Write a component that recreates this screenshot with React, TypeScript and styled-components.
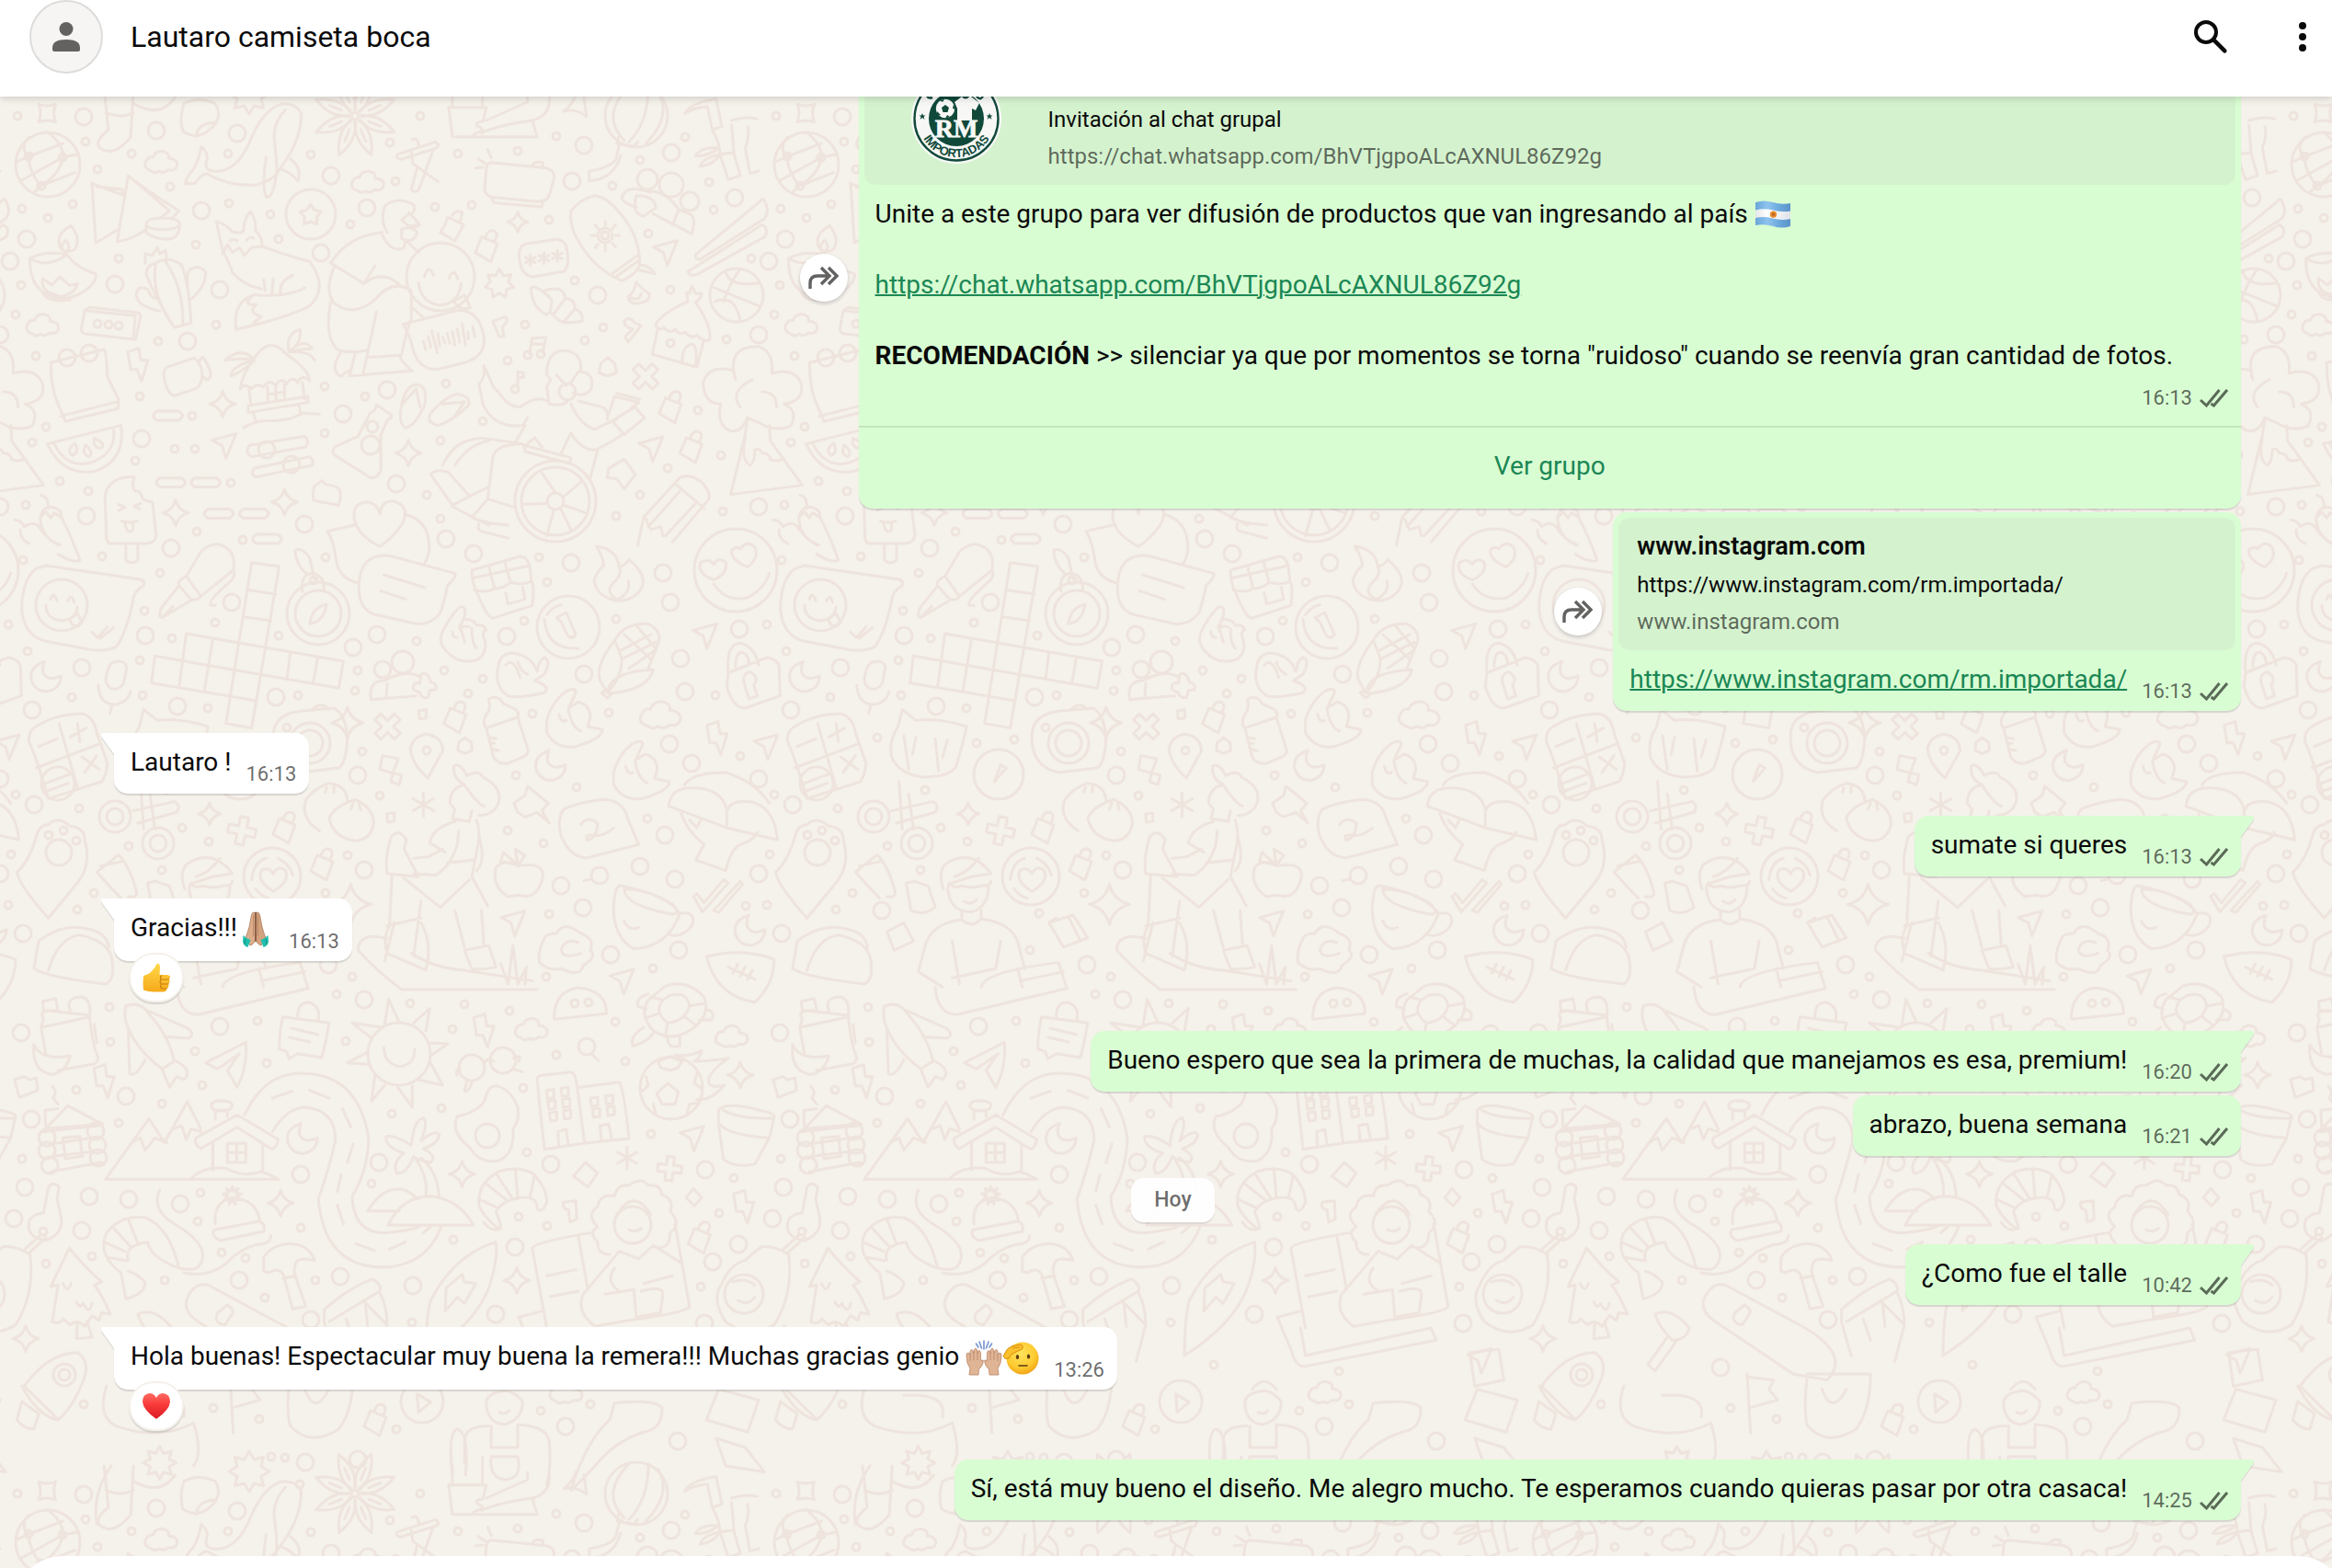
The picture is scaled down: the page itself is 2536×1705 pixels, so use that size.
import React from "react";
import styled, { createGlobalStyle } from "styled-components";

const GlobalStyle = createGlobalStyle`
  *, *::before, *::after { box-sizing: border-box; }
  body {
    margin: 0;
    background: #f5f1eb;
    font-family: Roboto, "Open Sans", sans-serif;
    color: #0a0a0a;
  }
  button { font: inherit; border: 0; padding: 0; background: none; cursor: pointer; }
`;

/* ---------- wallpaper doodles ---------- */

const TILE_W = 825;
const TILE_H = 1498;
const SX = 0.5262;
const SY = 0.3333;

type Ring = [number, number, number?];
type Sheet = { top: number; paths: string[]; small: Ring[]; big: Ring[]; rings: Ring[] };

const px = (x: number, y: number, pts: [number, number][], close = true) =>
  "M" + pts.map(([a, b]) => `${(x + a / SX).toFixed(1)} ${(y + b / SY).toFixed(1)}`).join("L") + (close ? "Z" : "");

const star = (x: number, y: number, n: number, r1: number, r2: number) =>
  px(
    x,
    y,
    Array.from({ length: n * 2 }, (_, i) => {
      const a = (Math.PI * i) / n - Math.PI / 2;
      const r = i % 2 ? r2 : r1;
      return [r * Math.cos(a), r * Math.sin(a)] as [number, number];
    })
  );

const spark = (x: number, y: number, r = 14) => {
  const w = r / SX;
  const h = r / SY;
  return `M${x} ${y - h}Q${x + w * 0.2} ${y - h * 0.2} ${x + w} ${y}Q${x + w * 0.2} ${y + h * 0.2} ${x} ${y + h}Q${x - w * 0.2} ${y + h * 0.2} ${x - w} ${y}Q${x - w * 0.2} ${y - h * 0.2} ${x} ${y - h}Z`;
};

const cloud = (x: number, y: number, k = 1) => {
  const p = (a: number, b: number) => `${x + a * k} ${y + b * k}`;
  return `M${p(-20, 30)}Q${p(-40, 20)} ${p(-30, -5)}Q${p(-25, -18)} ${p(-17, -14)}Q${p(-12, -38)} ${p(5, -34)}Q${p(18, -28)} ${p(15, -12)}Q${p(34, -10)} ${p(33, 12)}Q${p(30, 32)} ${p(14, 26)}Q${p(6, 40)} ${p(-4, 30)}Q${p(-14, 40)} ${p(-20, 30)}Z`;
};

const cross = (x: number, y: number, rot: number, s = 15) => {
  const w = s * 0.3;
  const pts: [number, number][] = [
    [-w, -s], [w, -s], [w, -w], [s, -w], [s, w], [w, w], [w, s], [-w, s], [-w, w], [-s, w], [-s, -w], [-w, -w],
  ];
  const c = Math.cos(rot);
  const d = Math.sin(rot);
  return px(x, y, pts.map(([a, b]) => [a * c - b * d, a * d + b * c] as [number, number]));
};

const bolt = (x: number, y: number) =>
  px(x, y, [[-11, -14], [1, -18], [3, -5], [11, -5], [4, 18], [-1, 5], [-8, 5]]);

const moon = (x: number, y: number) =>
  `M${x - 3} ${y - 52}Q${x - 36} ${y - 35} ${x - 30} ${y + 10}Q${x - 20} ${y + 50} ${x + 5} ${y + 45}Q${x + 30} ${y + 35} ${x + 31} ${y - 5}Q${x + 5} ${y + 15} ${x - 6} ${y - 15}Q${x - 8} ${y - 35} ${x - 3} ${y - 52}Z`;

const lock = (x: number, y: number) =>
  px(x, y, [[-5, -10], [12, -3], [5, 17], [-12, 7]]) +
  `M${x - 2} ${y - 28}Q${x + 4} ${y - 58} ${x + 18} ${y - 48}Q${x + 26} ${y - 38} ${x + 16} ${y - 14}`;

const pill = (x: number, y: number) =>
  `M${x - 22} ${y - 15}H${x + 22}Q${x + 38} ${y} ${x + 22} ${y + 15}H${x - 22}Q${x - 38} ${y} ${x - 22} ${y - 15}Z`;

const nav = (x: number, y: number) => px(x, y, [[-13, -4], [13, -11], [2, 16], [-2, 2]]);

const square = (x: number, y: number) => px(x, y, [[-4, -4], [4, -5], [4, 4], [-3, 5]]);

const asterisk = (x: number, y: number, s: number) =>
  [0, 1, 2]
    .map((i) => {
      const a = (Math.PI * i) / 3 + Math.PI / 2;
      return px(x, y, [[s * Math.cos(a), s * Math.sin(a)], [-s * Math.cos(a), -s * Math.sin(a)]], false);
    })
    .join("");

const petals = (x: number, y: number) =>
  Array.from({ length: 8 }, (_, i) => {
    const a = (Math.PI * 2 * i) / 8 + 0.39;
    const at = (r: number, o: number) =>
      `${(x + (r * Math.cos(a + o)) / SX).toFixed(1)} ${(y + (r * Math.sin(a + o)) / SY).toFixed(1)}`;
    return `M${at(7, -0.3)}Q${at(26, -0.5)} ${at(46, 0)}Q${at(26, 0.5)} ${at(7, 0.3)}M${at(16, 0)}L${at(30, 0)}`;
  }).join("");

const hand =
  "M1130 580Q1140 520 1170 485Q1190 470 1190 490L1175 540L1195 520Q1220 530 1220 570L1215 600L1245 610Q1245 640 1190 665Q1150 675 1130 620ZM1155 560Q1160 590 1170 580M1175 545Q1180 600 1200 615";

const handAt = (dx: number, dy: number) => {
  let odd = false;
  return hand.replace(/\d+/g, (n) => {
    odd = !odd;
    return String(Number(n) + (odd ? dx : dy));
  });
};

const sheets: Sheet[] = [
  {
    top: 106,
    paths: [
      "M80 22Q97 32 115 22Q108 50 115 80Q97 70 80 80Q87 50 80 22Z",
      "M60 130Q40 160 58 193Q62 250 85 288M98 113Q130 150 130 193Q125 250 85 288M35 210L58 193L130 150M45 270L130 195L162 185M70 310L85 288L155 245",
      "M215 -30L224 105Q190 150 210 168Q235 195 270 130L276 -30M219 50Q250 70 276 50M276 20Q330 70 362 0",
      "M380 20Q410 -5 445 20Q460 60 440 95Q410 145 378 110Q370 70 380 20ZM405 128Q410 80 447 82",
      star(515, -12, 8, 22, 14),
      "M622 50Q610 15 580 22Q545 40 520 130Q490 250 440 240Q420 235 428 200Q430 180 416 160Q412 200 400 235Q385 255 383 282L403 280Q415 250 428 248Q470 290 530 285Q570 265 575 240Q625 140 622 50ZM590 40Q560 90 568 150Q572 210 572 240Q565 330 551 325Q540 300 550 195M600 200Q625 230 616 272Q600 245 583 235",
      petals(734, 60),
      "M927 32L935 128H1110L1100 75M927 32H1005L998 78M935 30V-30M997 30V-60M1005 75L1090 15V-10M998 78Q980 80 988 95Q1000 100 995 110Q975 120 978 128M995 115Q1030 90 1100 75Q1140 60 1135 -10",
      "M822 185L900 145Q910 155 902 165L828 202Q815 198 822 185ZM852 137Q860 130 864 145L866 160M850 180L853 215L905 275M862 230L850 300Q858 315 866 300L895 170",
      "M1015 212L1130 230Q1148 240 1145 265L1135 320Q1130 340 1110 340L1015 325Q998 315 1002 290L1005 230Q1008 212 1015 212ZM1018 325Q1015 345 1030 345L1120 357L1122 340M1100 222Q1105 208 1122 212V228M988 200L1003 215M1008 170L1015 197M983 230L998 228",
      "M1300 -38Q1240 60 1290 140M1340 -35Q1340 80 1300 145M1360 -20Q1390 60 1335 150M1278 130L1275 150L1310 160L1318 145M1280 155L1275 185Q1275 225 1218 240V272Q1270 265 1282 190",
      "M1190 -10Q1185 20 1165 45Q1190 35 1212 62L1207 0",
      "M1415 52Q1430 15 1480 5L1492 95L1472 105L1462 30Q1440 30 1415 52ZM1472 105Q1488 150 1488 185L1505 268L1530 255L1517 185L1512 90M1488 185L1515 180M1512 75Q1540 60 1565 70M1545 95Q1550 130 1540 165L1550 248L1568 240M1437 190Q1450 160 1485 165Q1460 195 1437 190ZM1447 225Q1450 200 1488 185Q1475 220 1447 225Z",
      cloud(333, 210),
      cloud(760, 275),
      cloud(88, 742),
      "M190 280L198 475L242 432M190 280L253 318V300L200 290M265 255L242 470Q270 465 303 430M265 255Q290 290 370 370L355 395M265 255Q300 300 350 370L330 395M302 412Q305 393 336 393Q370 393 371 412Q368 430 336 431Q305 430 302 412V440Q320 465 350 462Q372 455 371 412",
      "M147 418Q110 450 127 495Q140 510 155 495Q168 460 147 418ZM136 466Q120 490 135 505Q150 490 136 466ZM62 525Q60 610 95 640Q130 670 165 640Q200 610 198 575Q160 560 138 512Q90 500 62 525Q100 560 138 512M88 590Q85 620 100 635L125 650Q155 640 160 608L143 612Q135 600 123 585L107 612ZM88 635Q95 670 145 660",
      "M1570 340L1438 512Q1435 530 1448 527L1580 395Q1590 375 1583 350Q1578 320 1570 340ZM1575 415L1422 568Q1425 585 1440 578L1580 455Q1590 430 1575 415Z",
      "M322 540Q345 515 375 545Q390 600 395 735Q380 745 360 750Q320 650 303 580Q300 550 322 540ZM322 540Q310 640 360 750M340 530Q380 620 378 740M300 540V510L315 515L325 490L330 510L342 500L345 530M330 697Q280 680 282 640Q285 610 305 625Q310 650 320 655M393 660Q425 620 425 570Q410 540 390 565Q385 590 388 610",
      "M447 405Q455 460 460 500Q475 540 480 570Q500 610 540 625M447 405Q465 410 480 438Q500 445 503 435Q505 390 518 372Q530 400 528 435Q545 460 540 485Q600 520 640 535Q680 620 640 680Q600 715 488 757Q480 660 530 642M460 510L470 480L480 505L495 490L505 515L520 490L545 485M520 650Q500 680 530 675Q510 700 540 715L525 735M545 595L548 630M565 590L562 640M580 640Q575 600 605 580M530 645Q600 650 630 620M475 468Q483 458 490 468M510 465Q518 452 524 460",
      star(642, 384, 5, 12, 7),
      "M790 440Q720 450 683 540L752 607L775 550M690 555Q670 630 690 670Q730 720 775 660Q810 590 850 630V720Q840 760 830 840Q820 850 852 892L722 908L735 830M683 670Q670 790 700 825Q730 835 758 825M778 700L750 905M758 848L830 840M705 828Q680 890 705 910Q718 890 725 890M752 607Q790 560 825 610M800 440Q785 400 795 355Q820 320 855 350Q860 380 845 380L830 400L845 420L865 415L860 400M845 375L868 415L855 425M790 450Q810 510 835 490L838 465L865 505M830 430Q850 415 862 440Q855 480 830 460Z",
      "M865 605Q870 670 910 678Q950 670 953 605M877 585Q885 540 896 580M928 590Q937 550 946 592M938 665L960 645L972 685Q950 700 938 665Z",
      "M833 740L945 695Q990 690 1000 780Q1005 845 960 865L910 885Q870 895 855 830Q845 765 833 740ZM875 795L880 823M885 780L890 815M892 762L904 833M905 770L909 812M915 782L919 802M924 770L930 803M935 765L940 808M945 755L950 798M955 738L962 808M967 765L968 788M977 748L981 780M855 690L875 718",
      "M925 390L958 415L940 468L910 440L920 415ZM935 385Q940 365 955 375Q955 390 950 405",
      lock(1005, 485),
      "M1085 478L1150 463Q1170 465 1172 500Q1178 550 1165 568L1100 585Q1080 580 1075 540Q1068 490 1085 478Z",
      asterisk(1096, 530, 6),
      asterisk(1124, 524, 6),
      asterisk(1152, 517, 6),
      "M1230 320Q1200 330 1180 370Q1175 420 1200 480Q1230 560 1285 598Q1325 570 1322 530Q1318 440 1280 375Q1255 325 1230 320ZM1265 575L1318 515M1273 585L1322 530M1251 405V418M1251 482V500M1222 450H1230M1272 450H1280M1230 415L1236 428M1272 415L1266 428M1230 490L1236 478M1272 488L1266 476M1322 545Q1345 550 1353 575L1318 562",
      "M1345 310Q1290 280 1285 330Q1295 350 1315 358M1315 320Q1305 380 1330 388Q1345 370 1355 360Q1355 320 1315 320ZM1345 305Q1380 310 1402 365L1425 380Q1440 390 1430 445L1350 380M1390 415L1402 370",
      "M1475 620L1568 680M1500 570Q1510 620 1568 605M1530 560Q1510 600 1495 665M1478 665Q1520 640 1530 730",
      star(1032, 608, 7, 16, 10),
      "M1315 602Q1310 640 1298 650Q1300 675 1320 672Q1345 665 1342 640Q1330 630 1315 602ZM1300 650Q1320 670 1325 640",
      "M1422 665Q1360 710 1355 745Q1365 765 1372 750Q1385 775 1395 755Q1405 780 1415 765Q1430 790 1440 775Q1455 800 1467 790Q1470 740 1437 668M1360 750L1348 838L1440 880L1455 790M1410 860Q1410 810 1430 805Q1442 810 1438 870M1422 665Q1415 625 1425 640L1430 615L1438 640L1450 640Q1450 655 1437 668",
      "M1097 620Q1110 610 1140 660Q1140 700 1130 708Q1100 690 1097 620ZM1125 630Q1165 610 1168 655Q1190 660 1188 690Q1205 695 1203 730Q1180 735 1165 735Q1150 725 1138 700M1168 655L1143 710M1188 690L1165 732",
      "M1018 730L1045 715Q1052 730 1038 750L1042 778L1032 780Z",
      "M1094 835L1100 785L1128 783L1122 832M1098 805L1126 803M1070 945L1070 895L1082 898V912L1072 915",
      "M1290 730Q1300 710 1312 735L1325 745L1298 798L1292 780L1308 755Q1290 750 1290 730Z",
      "M105 865L215 822Q220 822 222 910L245 985L244 1015L135 1057L120 1000Q105 950 105 865ZM125 1040L244 992",
      "M185 685L285 702Q292 705 290 718L280 790L175 770Q168 765 168 755L175 695ZM175 695L280 712L275 788",
      bolt(285, 872),
      "M345 880L400 850Q415 860 418 900Q418 935 405 950L360 973Q345 965 340 920Q335 890 345 880ZM410 870Q415 845 420 848Q430 870 436 900Q434 920 428 922L418 910",
      "M497 950Q500 900 530 840Q560 780 590 835Q640 890 640 925Q625 900 615 930Q605 905 592 935Q580 910 570 940Q558 915 545 945Q532 930 520 950Q505 930 497 950ZM515 950L518 1000M625 930L630 985M513 1005L637 975V995L513 1028ZM523 1030L530 1060M617 1000L622 1035M503 1078Q530 1050 560 1055Q600 1055 625 1030L660 1033M553 945V990M588 938V980M553 970L588 960M570 940V985M525 855Q500 810 465 857Q490 850 525 855Q475 880 478 908Q500 895 525 860M597 830Q590 770 620 757Q625 800 597 830Q630 780 645 820Q625 820 597 830Q640 825 650 857",
      "M1520 920Q1500 810 1568 812Q1600 830 1595 900Q1640 880 1655 930Q1665 990 1620 1000Q1650 1020 1635 1070Q1620 1085 1590 1078Q1570 1060 1545 1045Q1530 1100 1505 1085Q1480 1060 1490 1000Q1455 1000 1453 930Q1465 870 1515 890M1530 1010Q1505 960 1555 920M1605 1010Q1605 960 1575 960",
      "M1545 1045L1540 1100L1510 1295L1658 1265L1592 1120L1590 1070M1540 1110Q1530 1180 1550 1200Q1560 1190 1560 1150Q1568 1140 1575 1160Q1590 1160 1592 1180Q1600 1190 1620 1180",
      pill(347, 1038), pill(353, 1256), pill(425, 1256), pill(452, 1358), pill(525, 1358), pill(552, 1440),
      "M98 1130L250 1070Q260 1180 200 1218Q130 1240 98 1130ZM112 1130Q140 1215 190 1190Q240 1160 235 1085M155 1128Q135 1150 150 1168Q165 1155 155 1128ZM177 1133Q168 1165 184 1172Q195 1160 177 1133ZM195 1112Q190 1140 208 1145Q222 1130 195 1112Z",
      nav(463, 1130), nav(1375, 500), nav(1345, 1140),
      spark(460, 1000), spark(844, 1160), spark(588, 1320), spark(363, 1355), spark(1070, 406, 11),
      "M515 1135L630 1105Q640 1120 632 1140L520 1172Q505 1160 515 1135ZM525 1210L640 1172Q650 1185 645 1200L530 1238Q515 1230 525 1210Z",
      "M778 1002L808 1035Q812 1045 802 1050L787 1100V1215Q780 1245 765 1240L690 1165Q685 1155 692 1140L740 1105L765 1030L775 1020Z",
      "M860 937Q885 940 878 1000Q860 1070 838 1078Q820 1060 832 990Q840 940 860 937ZM832 1000L860 950L868 1010M945 968Q975 975 968 1005Q930 1060 905 1070Q880 1060 890 1030Q920 975 945 968ZM915 1000L960 993L935 1050",
      "M1000 875L1020 945L1035 970Q1050 1010 1075 1010Q1110 970 1130 990M1000 875Q1005 910 990 935L998 1000Q1020 1080 1080 1070L1090 1045M1085 1070L1065 1125M1195 990L1245 1010Q1258 1020 1255 1050M1180 1000Q1200 1070 1230 1083Q1255 1060 1275 1050M1180 1095L1160 1160M1180 1095Q1200 1150 1230 1150Q1270 1120 1285 1100M1235 1150L1220 1240M1265 1055L1312 1010L1332 1045L1290 1100ZM1255 1045L1270 975L1320 995L1305 1012M1275 965L1322 985",
      "M1130 900Q1130 830 1165 825Q1205 830 1200 895Q1230 900 1222 950Q1210 980 1185 965M1130 905L1138 920L1130 945L1135 1000Q1170 1010 1175 985M1170 940L1150 905M1180 930L1195 895",
      "M915 1200Q940 1110 1000 1112L1080 1130M940 1200Q970 1130 1010 1120M925 1220L970 1300M925 1222Q900 1210 890 1230L935 1330L1010 1270M1080 1130Q1020 1130 1018 1180L1008 1310L1060 1335M935 1335L1010 1395M1008 1310L975 1370Q1000 1390 1050 1395M990 1390Q985 1410 995 1415L1050 1438M1083 1135L1180 1175Q1180 1190 1172 1192L1085 1155ZM1090 1130L1105 1110L1120 1140",
      "M1148 1290L1120 1225M1163 1305L1200 1255M1165 1330L1210 1355M1145 1345L1130 1430M1130 1325L1078 1327M1160 1345L1180 1410",
      cross(1334, 910, 0.78), star(1256, 882, 3, 11, 9), lock(1385, 1010), lock(1428, 1140),
      "M1258 1210L1290 1180L1313 1230L1290 1278L1275 1245L1255 1240Z",
      "M1390 1450L1465 1310Q1470 1290 1450 1255Q1425 1225 1405 1240L1330 1370L1318 1460M1395 1260L1455 1340M1405 1285L1340 1400M1440 1320L1375 1430M1335 1375L1345 1410L1365 1400L1370 1430",
      "M220 1440L217 1300Q225 1235 278 1238Q270 1270 280 1285Q290 1280 295 1310Q310 1320 315 1320L323 1430Q320 1455 300 1455H225ZM245 1328L258 1337L245 1348M290 1325L277 1333L288 1343M252 1382Q268 1390 283 1382M258 1387Q262 1430 275 1410V1387M260 1455V1510Q272 1525 285 1510V1455",
      "M85 1298Q100 1300 100 1340M83 1370L90 1345Q105 1325 125 1350L127 1370L112 1355L105 1372L95 1352L83 1370Q85 1440 125 1460M127 1370Q150 1440 165 1510Q150 1520 120 1490M30 1378Q45 1380 50 1400Q70 1380 80 1400Q90 1430 120 1460M42 1410Q40 1440 60 1455",
      "M650 1268L665 1250L672 1262Q690 1265 700 1275Q708 1290 700 1330L648 1315Q645 1290 650 1268Z",
      "M785 1358Q790 1310 815 1318Q850 1335 830 1395Q810 1440 785 1465Q740 1430 732 1375Q728 1320 760 1320Q780 1325 785 1358ZM732 1395L677 1415Q690 1450 695 1510Q700 1570 742 1585M838 1360Q885 1380 887 1460Q888 1500 875 1525",
    ],
    small: [[36,60],[177,145],[272,184],[202,235],[472,184],[642,187],[806,148],[868,61],[947,182],[1070,175],[1149,127],[1416,128],[1323,204],[1265,289],[1465,276],[818,272],[352,292],[46,363],[151,348],[99,393],[473,344],[558,381],[575,461],[725,414],[898,356],[975,351],[1135,399],[405,480],[245,524],[43,613],[1340,443],[1475,367],[1553,526],[1187,598],[1385,628],[1086,741],[1247,751],[1209,791],[447,741],[32,709],[326,796],[75,842],[1049,857],[289,974],[670,942],[755,975],[921,932],[398,1038],[95,1075],[998,1055],[1443,1020],[671,1096],[910,1118],[67,1126],[362,1146],[403,1146],[280,1186],[1490,1168],[1379,1208],[1323,1297],[882,1295],[477,1256],[124,1252],[182,1284],[53,1329],[1493,1349],[1273,1365],[910,1373],[407,1416],[501,1442],[1501,788],[590,-57],[58,193],[130,195],[86,288],[202,737],[224,741],[246,745],[1090,840],[1117,838],[1065,950],[734,60],[1385,800]],
    big: [[173,63],[324,108],[491,118],[685,255],[1206,156],[1388,179],[1182,272],[1518,328],[759,359],[416,369],[56,462],[664,508],[21,533],[237,610],[454,627],[1236,644],[387,794],[800,955],[709,1031],[293,1113],[819,1260],[629,1392],[179,1364],[922,1440],[1568,773],[0,1334],[631,-42],[138,850],[184,833],[552,1148],[602,1198],[1172,960],[1148,1317]],
    rings: [[98,220,35],[1315,60,34],[642,382,27],[910,586,37],[1338,267,11],[1388,285,13],[1426,338,10],[1522,645,29],[769,1075,6],[765,1135,10],[1148,1317,44],[1148,1317,37],[1251,450,8],[1251,450,4]],
  },
  {
    top: 590,
    paths: [
      "M75 85L95 75L290 120Q300 125 297 140Q275 160 275 190Q260 300 240 340Q220 355 190 350L90 320Q50 300 45 220Q45 120 75 85ZM95 205Q95 250 128 255Q158 250 160 210M105 185Q110 155 118 190M140 190Q148 165 153 195M143 250L160 232L170 260Q155 290 143 250M190 292L202 310L222 275M208 312L235 277",
      "M385 110L415 30Q430 5 450 5Q490 20 482 90L415 175M385 110Q365 125 370 140L395 185Q410 190 415 175ZM370 140L335 210Q325 240 335 245L395 188M335 245L358 208M482 90Q490 110 470 135Q430 190 435 205L445 205",
      "M520 65L577 78L520 605L467 590ZM385 297L710 387L700 475L320 370L313 458L527 515M385 297L370 470M440 313L422 487M600 358L593 445M657 373L647 460M515 155L570 168M505 242L560 255",
      "M610 25Q625 15 640 50L650 120M610 25Q610 70 635 105M625 160Q620 105 645 100Q670 105 670 155M675 202Q645 210 640 265Q668 260 675 202Z",
      "M760 60Q780 35 810 45L940 100Q945 110 925 140Q920 180 910 230Q890 270 860 265L775 235Q745 220 742 160Q740 90 760 60ZM793 105L878 147M787 157L838 185",
      "M975 90L1075 45Q1090 45 1095 80L1098 125Q1105 140 1100 205L1018 247Q1005 240 985 160Q975 130 975 90ZM1010 75L1022 150M1043 60L1055 130M980 115L1095 75M980 155Q1005 165 1022 150Q1040 150 1055 130Q1085 140 1098 125M1045 165L1050 200L1085 185L1080 145",
      "M1232 12Q1275 20 1280 80Q1295 70 1300 55Q1340 110 1325 150Q1310 190 1275 190Q1230 175 1228 120Q1240 80 1248 75Q1245 40 1232 12ZM1275 185Q1245 160 1275 120Q1285 100 1280 80M1278 185Q1305 160 1298 125",
      "M1475 70Q1485 45 1500 65Q1505 100 1475 122Q1440 100 1448 65Q1465 50 1475 70ZM1530 20Q1545 -10 1560 15Q1570 50 1545 80Q1510 55 1512 25Q1520 10 1530 20ZM1475 135Q1500 195 1545 180Q1580 150 1590 100",
      "M915 290Q930 240 950 210Q965 205 960 240L950 280Q960 270 970 275M960 250Q980 250 985 270Q1000 265 1005 285Q995 290 1000 310Q1010 350 990 380Q950 405 920 350Q905 320 915 290M935 290Q935 310 945 310M950 270Q960 320 960 325M975 280Q975 330 985 345",
      "M1125 250Q1130 350 1195 345M1130 235Q1145 205 1160 203M1150 245L1170 228L1190 300Q1180 320 1172 300L1160 260Z",
      "M1030 400Q1035 360 1060 360Q1100 370 1110 420Q1115 380 1125 375Q1140 385 1125 430L1105 450Q1140 470 1125 490Q1070 510 1050 500Q1020 470 1030 400ZM1045 400Q1060 370 1075 440M1070 390Q1075 420 1090 430",
      "M1270 320Q1230 400 1240 450L1255 490Q1285 440 1285 380Q1280 350 1270 320ZM1255 490Q1260 420 1350 415Q1340 480 1260 492M1255 480L1243 490L1255 507L1265 492M1270 320Q1290 260 1340 265Q1370 290 1360 330L1340 410M1285 350L1345 300M1285 380L1355 325M1300 410L1355 350M1290 300L1345 380M1315 270L1355 345",
      "M235 390Q260 380 262 410L255 460Q245 485 228 475Q215 460 220 430Q225 395 235 390ZM203 465Q205 530 240 528Q265 520 270 485M232 530L227 558",
      moon(95, 440), moon(1138, 730), moon(1550, 1268),
      "M767 512Q760 450 795 450Q840 410 870 440M767 512L860 500M800 460L798 505M870 430Q880 420 887 440L890 455Q905 460 900 480L888 482L885 505Q870 510 868 490L855 480Q850 455 868 458Z",
      "M1010 510Q1030 495 1040 525L1060 540Q1075 550 1070 570L1005 605Q995 590 1005 560Q1015 545 1010 510ZM1005 605L1020 700Q1030 725 1050 720L1080 700Q1095 690 1090 670L1070 570M1010 635L1025 640M1015 655L1022 655M1018 675L1030 678",
      hand,
      handAt(138, 170),
      cloud(1365, 562, 1.25),
      "M1505 425Q1500 330 1530 328Q1560 340 1568 400M1520 405Q1520 355 1535 358Q1548 370 1548 395M1505 425L1585 375Q1605 380 1610 400L1612 500L1540 540Q1515 540 1502 470ZM1540 470Q1530 430 1550 422Q1570 440 1558 465L1565 500L1548 510Z",
      spark(718, 588, 17), cross(801, 600, 0.78), square(873, 560), lock(940, 570), lock(587, 930), lock(665, 1050),
      "M882 625Q915 635 915 680L884 768Q850 720 848 670Q855 630 882 625Z",
      "M70 605Q110 560 170 558Q195 570 200 620L222 720Q220 760 210 780L100 835Q75 700 60 650Q58 620 70 605ZM75 735L208 655M122 590L160 800M80 665L118 640M160 590L165 650M145 635L178 605M170 700L205 740M200 695L175 750M95 785L145 755M98 810L142 785",
      "M288 600L297 545L325 580Q370 570 430 600Q425 640 408 730Q395 765 340 765Q290 755 275 700Q268 650 288 600ZM300 630L310 740M325 635L318 690M365 640L372 745M390 645L380 700",
      "M487 780L500 725L512 735Z",
      "M565 620Q570 560 620 550L690 540Q715 560 718 640Q715 720 700 735L620 750Q560 730 565 620ZM645 545Q665 515 680 545",
      star(961, 664, 3, 9, 8),
      "M790 695L823 705L812 752L785 740ZM812 752L830 758L825 790L808 780Z",
      "M275 875L360 845Q375 855 365 880L285 915M290 780L297 935M310 820L320 935",
      spark(433, 885, 12), cross(500, 940, 0.2), asterisk(875, 855, 13), square(807, 897), bolt(1482, 638),
      "M660 940Q620 900 632 840Q650 800 680 785Q715 790 718 840M680 900Q690 860 735 838Q775 870 772 920Q765 970 735 973Q690 965 680 900ZM675 800L672 815M690 795V815M730 850L725 870M742 852L745 872",
      "M1090 795L1133 850L1120 875L1135 915L1110 880L1085 895L1070 880L1062 850L1085 825Z",
      "M1165 870Q1200 845 1250 838Q1290 845 1297 900L1320 985L1215 1028Q1180 1030 1160 960Q1150 900 1165 870ZM1200 920Q1215 890 1235 915Q1235 960 1215 972Q1205 950 1230 955Q1245 960 1268 932",
      "M1382 860Q1385 800 1430 800Q1490 800 1502 870V930ZM1415 790Q1430 750 1500 750Q1560 780 1590 850M1505 870Q1510 840 1550 845Q1600 860 1607 970L1500 930M1408 885Q1420 940 1455 985L1438 1035L1500 1070Q1510 1000 1530 985Q1560 970 1565 945M1425 905L1440 930L1448 905",
      "M75 960Q80 920 100 920Q120 890 145 925Q175 930 175 970Q190 1050 160 1110L100 1225Q40 1120 35 1075Q60 1040 75 960Z",
      "M200 1075L245 1018Q270 1060 282 1140Q285 1160 265 1155M200 1075Q225 1120 250 1160M208 1055L253 1040M315 1200L305 1110L322 1105L350 1120L365 1190Q340 1220 315 1200Z",
      "M382 1130Q370 1080 385 1050Q430 1000 470 1060L480 1080L440 1090L400 1110Q385 1110 395 1160Q405 1205 440 1205Q475 1190 475 1120M405 1090Q430 1080 455 1030M395 1110Q400 1130 420 1120Q440 1130 460 1120Q480 1120 480 1105M425 1170Q440 1185 450 1165",
      "M420 1205V1230Q360 1240 345 1310L330 1400L380 1450M460 1200V1228Q520 1240 535 1300L550 1390M420 1230Q440 1260 460 1228M400 1300L415 1440M500 1300L490 1390L400 1420M300 1240L320 1300L280 1330L265 1270Z",
      "M565 1080Q575 1050 590 1070Q600 1105 565 1138Q530 1105 540 1070Q555 1055 565 1080ZM520 1100Q525 1040 550 1030M605 1085Q600 1050 575 1030M528 1130Q540 1155 555 1160",
      "M600 1240L650 1215L680 1290L630 1320ZM600 1240L615 1225M640 1220L665 1300",
      spark(725, 1180, 22),
      "M938 730Q950 715 965 760Q990 740 998 765Q1040 800 1030 850Q1020 890 990 890M960 790Q930 800 930 850L940 870L935 900L970 910L975 875M960 790Q985 850 1000 860M938 730Q935 770 960 790M940 910Q895 930 888 980L920 1010M985 905Q995 950 985 1010L975 1090L1008 1185M948 940L945 985Q930 1060 900 1085L855 1080M855 1030L885 1025L915 1000M925 1045L980 1035M990 960Q1005 1040 985 1070M808 960Q825 930 840 970L835 1000L865 1090L800 1080Q795 1030 808 960ZM835 1095L910 1190L970 1100M810 1090L805 1250M870 1170L855 1350M940 1200L960 1320M995 1200L1000 1310M960 1330L1010 1315L1025 1385Q990 1395 975 1390ZM805 1250Q790 1290 800 1340L880 1395Q895 1310 870 1240M800 1250L870 1225M795 1365L815 1240M740 1330Q740 1290 770 1285L800 1290M740 1330Q780 1400 830 1458H1110M850 1340Q900 1390 960 1395L1100 1430",
      "M1070 1055Q1040 1030 1025 1060Q1015 1120 1050 1155L1072 1150Q1110 1170 1122 1090Q1125 1040 1070 1055ZM1070 1055L1065 1000L1085 1020ZM1040 1010L1035 1040L1068 1050Z",
      "M1222 1098L1207 1103",
      "M1285 1120Q1270 1110 1268 1200Q1270 1290 1310 1325Q1380 1320 1405 1210Q1380 1150 1285 1120ZM1290 1130Q1290 1180 1380 1210Q1410 1220 1390 1180Q1340 1130 1290 1130ZM1405 1210Q1440 1200 1430 1250Q1410 1290 1385 1280M1290 1235Q1300 1270 1320 1255",
      "M1433 1155L1440 1145L1455 1175L1495 1100L1505 1110L1452 1205ZM1475 1200L1530 1105L1535 1115L1485 1207Z",
      "M1125 1290Q1110 1340 1115 1370Q1135 1400 1160 1390Q1200 1420 1205 1380Q1235 1350 1220 1330Q1230 1290 1200 1275Q1165 1230 1150 1275Q1130 1275 1125 1290ZM1195 1305Q1165 1290 1160 1330Q1165 1360 1200 1340",
      nav(1060, 1235), nav(1457, 298), nav(1285, 1425), nav(15, 660),
      "M1460 1350Q1540 1320 1600 1360Q1600 1440 1560 1500Q1480 1480 1460 1350ZM1505 1385L1560 1425M1515 1405L1525 1375M1530 1415L1540 1385M1545 1425L1555 1395",
      "M80 1300L70 1390Q100 1420 220 1440Q240 1420 230 1350Q220 1300 165 1280Q120 1290 100 1395M80 1300Q130 1240 180 1260Q220 1270 225 1320",
      "M1035 1375L1050 1440L1060 1315L1070 1440L1088 1385L1085 1440",
      "M365 1450Q370 1540 410 1540L635 1455M535 1390L545 1450M620 1370L637 1455M540 1430L630 1400M460 1450Q465 1400 620 1370",
    ],
    small: [[211,45],[48,57],[331,100],[672,47],[299,221],[18,266],[445,262],[1113,48],[1130,130],[1084,256],[1273,250],[575,303],[356,313],[57,355],[860,321],[288,384],[739,417],[917,418],[997,444],[148,504],[295,497],[733,482],[616,497],[967,493],[430,541],[1259,554],[1100,559],[1478,498],[748,681],[1529,695],[33,821],[164,866],[785,826],[1067,759],[1191,797],[1337,899],[376,929],[1049,939],[431,976],[266,989],[23,1017],[719,1021],[1123,982],[335,1067],[194,1142],[673,1142],[17,1181],[160,1196],[1542,1185],[1134,1213],[728,1415],[1128,1415],[1350,1390],[648,122],[593,602],[882,678],[100,955],[131,940],[157,972],[246,635],[450,655],[528,642],[344,808],[580,1210],[560,1330]],
    big: [[354,18],[978,36],[1180,67],[1371,100],[479,194],[1385,196],[300,303],[780,300],[730,343],[1527,281],[1047,306],[1406,379],[169,408],[570,505],[366,534],[66,545],[1206,428],[1415,487],[1384,656],[1429,720],[71,855],[740,760],[1374,954],[1323,1055],[1395,1097],[752,1069],[1159,1120],[1205,1190],[48,1274],[1262,1345],[1403,1330],[0,770],[0,1080],[678,1378],[1240,1085],[790,415],[255,1200]],
    rings: [[127,205,28],[657,230,34],[657,230,25],[1520,90,45],[1174,275,34],[832,390,12],[120,785,18],[640,655,22],[640,655,14],[496,757,27],[238,895,17],[238,895,9],[327,980,17],[327,980,9],[121,1010,14],[563,1090,31]],
  },
  {
    top: 1074,
    paths: [
      "M85 130L90 100Q80 80 100 75L185 90Q190 180 203 230Q200 250 190 250L120 270M85 130L185 95M85 130L95 220M88 45L115 35L120 75L90 75ZM145 75Q135 30 170 30Q190 40 185 95M70 185Q85 240 145 222Q135 280 105 283Q65 270 70 185ZM195 120L200 180",
      "M260 60Q290 40 310 90Q350 160 360 240L335 265Q280 200 262 120Q255 90 260 60ZM305 75L385 130Q405 150 390 165L340 160M265 140L268 280Q280 295 300 235M335 265L350 325L365 290L380 300Q400 270 365 240",
      "M425 245L508 178Q512 260 490 325L470 270L495 215L450 265Z",
      "M585 95L680 115Q675 170 665 228L615 215L598 232L592 208L577 200Q578 130 585 95ZM615 95Q615 45 640 48Q665 65 657 108M602 132L657 153M598 162L640 177",
      "M795 120L803 38L825 112M855 115L888 68L880 140M890 180L925 183L888 225M888 240L915 318L865 300M852 320V390L822 325M795 318L768 370L775 285M762 250L718 245L760 210M768 165L728 115L790 130M793 195Q795 250 827 257Q858 250 857 200",
      bolt(1000, 140), bolt(215, 305), bolt(1537, 715),
      cloud(1098, 135), cloud(1512, 158),
      "M30 300L50 290L60 300L75 295L78 335L40 358Z",
      "M1145 103Q1145 10 1195 0Q1255 10 1253 85Z",
      "M1375 -5Q1420 -30 1455 30Q1470 90 1430 135Q1390 180 1350 140Q1320 90 1340 40ZM1385 25Q1420 10 1425 60Q1415 110 1380 115Q1350 80 1370 40ZM1340 20Q1315 30 1318 60L1335 70M1330 130Q1300 160 1308 190Q1335 180 1350 150M1380 165Q1380 200 1405 190V160M1460 70Q1480 80 1470 105L1445 105M1370 40L1345 30M1425 60L1458 50M1415 95L1440 125M1380 115L1375 160M1360 85L1332 100",
      "M1222 215L1237 238",
      "M1000 245Q1010 225 1020 240M965 300L960 338Q970 340 975 308M1062 230Q1080 215 1072 240M1060 265L1080 275M945 285Q940 270 950 265",
      "M1110 300Q1110 285 1125 285L1180 275Q1190 280 1193 325L1208 507L1125 527ZM1198 325L1280 308Q1288 320 1300 492L1208 507M1155 520L1153 470L1170 462L1175 515M1243 500L1240 450L1258 445L1265 497",
      square(1137, 347), square(1167, 340), square(1140, 382), square(1170, 376), square(1143, 420), square(1172, 413), square(1228, 372), square(1259, 365), square(1232, 408), square(1262, 402),
      "M1380 312L1402 340L1395 380H1368L1357 345ZM1360 240L1385 225L1410 240L1400 262L1385 270L1365 260ZM1335 290L1340 320L1325 340M1440 280L1435 310L1450 330M1350 380L1355 410M1420 410L1425 380L1445 375M1395 220Q1430 225 1450 205Q1445 235 1435 240Q1460 240 1505 230Q1460 280 1465 310Q1470 330 1497 318Q1470 370 1440 365",
      "M1025 320Q1055 330 1070 390Q1075 430 1060 460Q1065 540 1030 565Q990 575 970 520Q930 470 945 420Q1000 400 1005 350Q1010 320 1025 320Z",
      "M140 385L95 460L212 445L140 385M95 470L93 400L120 395M108 322Q120 340 110 360L120 380M85 470L205 450M105 510L190 490M110 550L190 535M105 600L210 570M130 490L165 485L170 550L135 558Z",
      "M218 625L308 427L340 505L387 372L415 460M218 625H575M270 508L290 490L300 530L320 490L345 505M360 460L375 450L385 495L395 460L415 470",
      "M405 490L490 415L575 495Q570 530 560 525L490 455L415 525Q400 510 405 490ZM440 505V595M543 510V600M445 430V400H470V420M437 385Q437 368 458 368Q480 370 480 385Q478 402 458 402Q437 402 437 385ZM470 508H508V570H470ZM489 508V570M470 538H508M395 623Q420 580 470 590Q500 620 540 600Q560 610 575 625",
      "M505 415Q550 270 630 280Q740 285 762 490Q760 600 728 680Q730 800 795 800Q860 790 870 775M563 470Q590 395 630 390Q695 400 693 500Q680 590 658 690Q670 910 790 912Q880 910 912 780M563 360L603 338M640 335L680 360M708 395L725 455M730 510L718 570M705 610L697 665M697 710L710 770M735 835L773 857M805 853L837 830M875 800L890 780",
      moon(625, 495),
      "M855 550Q840 610 820 605Q810 570 835 540Q795 520 798 485Q820 480 850 515Q855 430 875 425Q885 440 870 500Q900 460 908 480Q905 510 875 525Q905 550 890 570Q860 560 855 550ZM860 560Q885 620 880 680M870 555Q905 600 907 680M802 775Q830 680 890 680Q950 690 978 775ZM760 728Q790 650 830 658Q850 665 862 690M760 728H825",
      spark(955, 608), spark(580, 703), spark(1068, 955), spark(1530, 285), spark(53, 1145),
      "M1030 785Q1000 750 990 710Q985 640 1030 600Q1070 580 1100 605Q1130 650 1130 700Q1120 740 1110 720Q1110 680 1080 685Q1040 690 1025 730Q1035 770 1035 785Q1015 800 1000 765M1005 640L1045 690M1025 605L1060 690M1065 590L1070 685M1105 610L1095 685M990 690L1030 720",
      "M100 650Q110 630 122 650L118 690L125 740Q135 800 95 825Q50 815 62 755Q75 735 90 735ZM85 805L50 855M95 815L60 865",
      "M250 930Q200 870 220 800Q250 740 300 750Q350 780 370 915M265 890Q255 840 305 830M222 880L260 890M215 830L258 860M235 785L270 845M265 755L285 835M250 930L260 1015Q300 1000 300 960Q280 930 265 925M305 830Q310 880 370 915M330 660Q310 730 370 780Q440 850 410 910Q400 925 370 915M380 930Q440 950 480 880Q510 840 545 835Q560 830 560 808",
      "M445 770Q440 700 480 685Q530 690 537 760M443 790L535 762Q550 770 545 795L455 825Q435 810 443 790Z",
      star(480, 678, 9, 10, 5),
      "M545 880Q560 840 600 835Q640 840 650 890Q625 880 615 890Q605 910 610 940L632 1040L605 1048L585 935Q575 910 555 930L545 925ZM585 948L612 940",
      "M1025 830Q940 870 890 1020Q880 1080 880 1200Q980 1100 1010 980Q1030 890 1025 830ZM922 980L955 935L960 960L983 965L960 1030L945 1010L920 1055Z",
      "M1100 850Q1105 830 1220 800M1100 850L1130 1110M1195 810L1215 985M1130 940L1190 920M1137 1008L1195 990M1395 770L1425 1040Q1420 1060 1300 1085L1230 1105Q1190 1060 1205 1000L1280 860L1320 885L1350 840L1410 900M1250 1000L1310 985M1270 915Q1250 960 1280 990M1330 965L1390 940M1310 985L1315 1080M1325 990Q1370 970 1370 1000L1365 1060L1315 1075M1120 1055L1072 1075L1100 1180Q1110 1240 1130 1235L1400 1150L1390 1110L1130 1200L1120 1110",
      "M1260 870Q1235 870 1235 830Q1215 800 1235 780Q1210 740 1235 715Q1240 670 1270 680Q1275 640 1300 645Q1325 615 1340 645Q1365 640 1368 675Q1395 690 1385 730Q1410 770 1385 800Q1385 860 1350 845M1275 740Q1310 650 1345 740M1300 790Q1315 800 1325 785",
      "M1165 700L1190 695L1192 755L1178 765L1175 725Q1160 720 1165 700ZM1210 570L1235 605L1215 650L1185 615ZM1433 655L1450 685L1435 712L1418 685Z",
      asterisk(1296, 555, 12), cross(1384, 590, 0.1, 13), lock(1445, 815), nav(1430, 485),
      "M1485 400Q1500 370 1570 400Q1600 410 1600 420L1590 490Q1500 480 1485 440ZM1485 440L1495 560Q1520 590 1560 575L1590 490M1495 400Q1530 430 1600 425",
      "M1575 845Q1600 840 1630 870Q1640 1000 1600 1100Q1550 1150 1500 1090Q1470 1020 1490 970Q1510 900 1540 890Q1560 860 1575 845ZM1515 960Q1540 945 1560 970M1525 1020Q1545 1040 1560 1010",
      "M143 850L105 975L120 970L108 1090Q125 1100 130 1080L145 1100Q160 1080 175 1105L190 1070L205 1085L210 1060L228 1065Q210 1000 195 970L210 960Q180 920 143 850ZM160 1100L158 1145L190 1140L180 1090M130 965Q140 1000 147 965M158 1025Q165 1050 172 1030Q185 1070 190 1030",
      "M385 1020Q400 960 430 970L595 1110Q690 1200 640 1280L570 1260L410 1090Q380 1060 385 1020ZM450 1060L470 1035Q485 1050 480 1065L465 1100Q440 1095 450 1060Z",
      "M670 1050Q720 980 770 950Q790 970 785 990L680 1090M670 1050V1090L690 1200M800 1100Q800 1040 785 995M715 1080L730 1150M750 1020L800 1100L780 1220M755 1030L760 1105",
      "M285 1065Q320 1040 355 1110Q350 1150 320 1150Q290 1100 285 1065ZM310 1140L270 1230L285 1250L330 1150",
      "M50 1300Q100 1190 160 1190Q190 1220 170 1290Q150 1370 120 1410Q80 1400 45 1300ZM50 1300L120 1408M45 1350L80 1390L70 1440Q50 1440 35 1410Z",
      "M862 1325L890 1352L865 1385ZM475 1260L482 1452M475 1270L530 1280L520 1310L538 1345L482 1370M600 1260Q590 1380 600 1430Q640 1500 700 1440Q730 1380 730 1260ZM630 1310Q650 1400 680 1310",
      lock(775, 1410), cloud(1170, 1320), nav(1490, 1210),
      "M1005 1350Q1005 1420 1042 1425Q1080 1410 1080 1350Q1065 1320 1045 1315Q1010 1320 1005 1350ZM1020 1310Q1045 1260 1070 1310M1010 1430Q960 1430 960 1480V1550M1070 1425Q1130 1430 1135 1480Q1140 1560 1130 1620M1015 1430V1500H1070V1430M1015 1530Q1010 1600 1045 1605Q1080 1600 1070 1530ZM935 1590Q925 1450 945 1440Q970 1450 962 1590M1032 1385Q1045 1395 1052 1380",
      "M1270 1355Q1350 1340 1368 1370Q1370 1440 1330 1450Q1270 1480 1230 1560Q1200 1610 1180 1640Q1210 1480 1260 1410L1270 1355ZM1485 1310L1568 1345L1545 1450L1460 1410ZM1470 1190L1530 1180L1540 1280L1480 1300Z",
      "M220 1300Q200 1400 240 1430Q330 1480 400 1420Q420 1520 400 1560M230 1560Q190 1650 200 1750M300 1330Q390 1320 380 1400M1480 1470L1540 1500L1580 1580L1500 1560Z",
      star(330, 1550, 8, 18, 11),
    ],
    small: [[227,62],[229,178],[402,208],[551,247],[533,108],[714,173],[848,52],[960,55],[1052,75],[935,135],[1272,112],[1149,220],[1293,240],[1081,327],[158,333],[334,377],[419,317],[45,558],[246,441],[809,411],[912,393],[1089,537],[768,640],[1346,477],[1516,620],[1487,735],[415,669],[409,761],[621,783],[1072,748],[1130,776],[937,823],[458,863],[95,900],[190,877],[340,953],[652,953],[547,1010],[1448,975],[851,1092],[172,1358],[440,1370],[536,1407],[1220,1360],[1117,1380],[695,22],[90,795],[1187,50],[1216,48],[507,883],[560,1530],[820,1440],[620,1620],[1200,1250],[940,1230]],
    big: [[753,40],[455,126],[43,148],[261,353],[64,429],[783,569],[1138,577],[1457,595],[622,608],[51,652],[185,680],[266,690],[372,706],[29,753],[169,791],[1064,845],[1526,836],[494,955],[703,943],[854,971],[1473,895],[642,1082],[1024,1065],[1455,1095],[1168,1430],[97,490],[97,532],[103,578],[197,468],[202,512],[203,555],[1212,193],[740,1540],[1400,1480],[420,1240]],
    rings: [[825,215,34],[975,262,14],[1040,238,14],[1387,327,34],[1008,483,13],[1538,1000,21],[1308,775,20],[133,1262,12],[133,1262,6],[873,1350,23]],
  },
];

const Backdrop = styled.svg`
  position: absolute;
  inset: 0;
  width: 100%;
  height: 100%;
  fill: none;
  stroke: #eee4dd;
  stroke-width: 3;
  stroke-linecap: round;
  stroke-linejoin: round;
  path { vector-effect: non-scaling-stroke; }
`;

const Wallpaper = () => (
  <Backdrop aria-hidden="true">
    <defs>
      <g id="doodles">
        {sheets.map((s) => (
          <g key={s.top}>
            <g transform={`translate(0 ${s.top - 105}) scale(${SX} ${SY})`}>
              {s.paths.map((d, i) => (
                <path key={i} d={d} />
              ))}
            </g>
            {[
              ...s.small.map(([x, y]) => [x, y, 4]),
              ...s.big.map(([x, y]) => [x, y, 9]),
              ...s.rings,
            ].map(([x, y, r], i) => (
              <circle key={i} cx={Math.round(x! * SX)} cy={Math.round(y! * SY) + s.top - 105} r={r} />
            ))}
          </g>
        ))}
      </g>
    </defs>
    {[0, 1].map((row) =>
      [-1, 0, 1, 2, 3, 4].map((col) => (
        <use key={`${row}-${col}`} href="#doodles" x={col * TILE_W} y={row * TILE_H} />
      ))
    )}
  </Backdrop>
);

/* ---------- page frame ---------- */

const Page = styled.div`
  display: flex;
  flex-direction: column;
  height: 100vh;
  overflow: hidden;
`;

const Header = styled.header`
  position: relative;
  z-index: 2;
  flex: none;
  display: flex;
  align-items: center;
  gap: 30px;
  padding: 0 8px 25px 32px;
  background: #fff;
  box-shadow: 0 2px 8px rgba(0, 0, 0, 0.16);
`;

const Avatar = styled.div`
  display: grid;
  place-items: center;
  width: 80px;
  height: 80px;
  border: 2px solid #dddcdb;
  border-radius: 50%;
  background: #f6f5f4;
`;

const Title = styled.h1`
  flex: 1;
  margin: 0;
  font-size: 32px;
  line-height: 40px;
  font-weight: 400;
`;

const Tools = styled.div`
  display: flex;
  gap: 52px;
`;

const IconButton = styled.button`
  display: block;
  width: 48px;
  height: 48px;
  color: #0a0a0a;
  svg { display: block; width: 48px; height: 48px; }
`;

const Chat = styled.main`
  position: relative;
  flex: 1;
  min-height: 0;
  overflow: hidden;
  display: flex;
  flex-direction: column;
  justify-content: flex-end;
`;

const Thread = styled.div`
  position: relative;
  flex: none;
  display: flex;
  flex-direction: column;
  padding: 0 99px 52px 114px;
`;

const Composer = styled.footer`
  position: relative;
  flex: none;
  height: 13px;
  overflow: hidden;
  margin-top: -13px;
  &::before {
    content: "";
    display: block;
    height: 104px;
    margin: 0 -15px 0 16px;
    border-radius: 52px;
    background: #fff;
  }
`;

/* ---------- messages ---------- */

const Row = styled.div<{ $out?: boolean; $first?: boolean; $reacted?: boolean }>`
  flex: none;
  display: flex;
  align-items: center;
  gap: 12px;
  justify-content: ${(p) => (p.$out ? "flex-end" : "flex-start")};
  padding-left: 10px;
  margin-top: ${(p) => (p.$first ? 24 : 4)}px;
  margin-bottom: ${(p) => (p.$reacted ? 52 : 0)}px;
`;

const Bubble = styled.div<{ $out?: boolean; $tail?: boolean; $wide?: boolean }>`
  position: relative;
  width: ${(p) => (p.$wide ? "65%" : "auto")};
  border-radius: 15px;
  border-top-left-radius: ${(p) => (p.$tail && !p.$out ? 0 : 15)}px;
  border-top-right-radius: ${(p) => (p.$tail && p.$out ? 0 : 15)}px;
  background: ${(p) => (p.$out ? "#d9fdd3" : "#fff")};
  box-shadow: 0 2px 1px rgba(11, 20, 26, 0.13);
`;

const Tail = styled.svg<{ $out?: boolean }>`
  position: absolute;
  top: 0;
  ${(p) => (p.$out ? "left: 100%;" : "right: 100%; transform: scaleX(-1);")}
  width: 14px;
  height: 24px;
  fill: ${(p) => (p.$out ? "#d9fdd3" : "#fff")};
  filter: drop-shadow(0 2px 0 rgba(11, 20, 26, 0.1));
`;

const Body = styled.div`
  display: flex;
  align-items: flex-end;
  gap: 16px;
  padding: 12px 14px 6px 18px;
`;

const StackedBody = styled(Body)`
  flex-direction: column;
  gap: 11px;
  margin-bottom: 9px;
`;

const Text = styled.div`
  margin-bottom: 8px;
  font-size: 28px;
  line-height: 40px;
`;

const Paragraphs = styled(Text)`
  align-self: stretch;
  display: grid;
  gap: 37px;
  margin-bottom: 0;
  p { margin: 0; }
`;

const TextLink = styled.a`
  color: #1b8755;
  text-decoration: underline;
  text-decoration-thickness: 2px;
`;

const Meta = styled.span`
  display: flex;
  align-items: center;
  gap: 8px;
  font-size: 22px;
  line-height: 30px;
  color: rgba(10, 10, 10, 0.62);
`;

const Preview = styled.a`
  display: flex;
  height: 144px;
  margin: 0 6px;
  border-radius: 12px;
  background: #d5f2cf;
  color: inherit;
  text-decoration: none;
  overflow: hidden;
`;

const PreviewPad = styled.div`
  padding-top: 6px;
`;

const Thumb = styled.div`
  flex: 0 0 200px;
  display: grid;
  place-items: center;
  svg { width: 98px; height: 98px; }
`;

const PreviewText = styled.div<{ $inset?: boolean }>`
  display: flex;
  flex-direction: column;
  justify-content: flex-end;
  padding: 0 20px 11px ${(p) => (p.$inset ? 20 : 0)}px;
  font-size: 24px;
  line-height: 40px;
  strong { font-size: 27px; font-weight: 600; line-height: 44px; }
  small { font-size: 24px; color: rgba(10, 10, 10, 0.6); }
`;

const Action = styled.button`
  display: block;
  width: 100%;
  height: 90px;
  padding-bottom: 6px;
  border-top: 2px solid #c4e4be;
  font-size: 28px;
  color: #1b8755;
`;

const Forward = styled.button`
  flex: none;
  display: grid;
  place-items: center;
  width: 52px;
  height: 52px;
  border-radius: 50%;
  background: #fff;
  box-shadow: 0 2px 4px rgba(11, 20, 26, 0.2);
`;

const Reaction = styled.button`
  position: absolute;
  top: calc(100% - 9px);
  left: 16px;
  display: grid;
  place-items: center;
  width: 60px;
  height: 54px;
  border: 2px solid #f5f1eb;
  border-radius: 27px;
  background: #fff;
  box-shadow: 0 2px 1px rgba(11, 20, 26, 0.13);
  svg { width: 32px; height: 32px; }
`;

const Day = styled.div`
  flex: none;
  align-self: center;
  margin-top: 24px;
  padding: 9px 25px;
  border-radius: 14px;
  background: rgba(255, 255, 255, 0.92);
  box-shadow: 0 2px 1px rgba(11, 20, 26, 0.1);
  font-size: 23px;
  line-height: 30px;
  font-weight: 500;
  color: rgba(10, 10, 10, 0.6);
`;

/* ---------- drawings ---------- */

const Emoji = styled.svg<{ $flag?: boolean }>`
  width: 40px;
  height: ${(p) => (p.$flag ? 30 : 40)}px;
  vertical-align: ${(p) => (p.$flag ? -6 : -13)}px;
`;

const Flag = () => (
  <Emoji $flag viewBox="0 0 40 30" role="img" aria-label="Argentina">
    <defs>
      <linearGradient id="sky" x1="0" x2="1">
        <stop offset="0" stopColor="#6ba6d8" />
        <stop offset=".35" stopColor="#8ec3ee" />
        <stop offset=".7" stopColor="#6aa7dc" />
        <stop offset="1" stopColor="#5b93c8" />
      </linearGradient>
      <linearGradient id="snow" x1="0" x2="1">
        <stop offset="0" stopColor="#e4e7ea" />
        <stop offset=".35" stopColor="#fff" />
        <stop offset="1" stopColor="#dfe3e8" />
      </linearGradient>
    </defs>
    <path d="M1 2Q10-1 20 2T39 3V28Q30 31 20 28T1 27Z" fill="url(#sky)" />
    <path d="M1 10.500Q10 8 20 10.500T39 11.500V20Q30 22 20 19.500T1 19Z" fill="url(#snow)" />
    <circle cx="20.500" cy="15.200" r="3.600" fill="#e98a2b" />
    <circle cx="20.500" cy="15.200" r="1.600" fill="#b9682a" />
  </Emoji>
);

const PrayingHands = () => (
  <Emoji viewBox="0 0 40 40" role="img" aria-label="manos juntas">
    <path d="M19.600 1Q16 .5 15.500 4L13 17Q11 24 9 29L14 37Q19.600 35 19.600 30Z" fill="#dcae8b" stroke="#a9775a" strokeWidth=".8" />
    <path d="M20.400 1Q24 .5 24.500 4L27 17Q29 24 31 29L26 37Q20.400 35 20.400 30Z" fill="#d3a27e" stroke="#a9775a" strokeWidth=".8" />
    <path d="M17.600 4V27M22.400 4V27" stroke="#b98261" strokeWidth=".9" />
    <path d="M20 1V33" stroke="#7d4f3b" strokeWidth="1.400" />
    <path d="M6.500 26Q9 29 14.500 31L11.500 39Q7 38 6 33Z" fill="#1fbfae" />
    <path d="M33.500 26Q31 29 25.500 31L28.500 39Q33 38 34 33Z" fill="#1fbfae" />
    <path d="M9 30L8 36M31 30L32 36" stroke="#14917f" strokeWidth="1" />
  </Emoji>
);

const RaisedHands = () => (
  <Emoji viewBox="0 0 40 40" role="img" aria-label="manos arriba">
    <g id="palm" fill="#dfb596" stroke="#b98466" strokeWidth=".8">
      <path d="M4 38L5 31Q1 26 1 17Q1 14 3 14Q4.500 14 5 17Q4.500 11 6.500 10.500Q8.500 10.500 9 15Q9 9 11 9Q13 9 13 15Q13.500 11 15 11.500Q17 12 16.500 20L17 23Q18.500 21 19.500 22.500Q19 28 14.500 32L14 38Z" />
      <path d="M5 17V23M9 15V22M13 15V22" fill="none" />
    </g>
    <use href="#palm" transform="translate(40 0) scale(-1 1)" />
    <path d="M20 1V10M15 2L17.500 9M25 2L22.500 9M11.500 4L14 8M28.500 4L26 8" stroke="#7393cf" strokeWidth="1.600" strokeLinecap="round" />
  </Emoji>
);

const Salute = () => (
  <Emoji viewBox="0 0 40 40" role="img" aria-label="saludo">
    <defs>
      <radialGradient id="skin" cx=".45" cy=".35" r=".7">
        <stop offset="0" stopColor="#ffe45c" />
        <stop offset=".65" stopColor="#fdc92f" />
        <stop offset="1" stopColor="#ee9a10" />
      </radialGradient>
    </defs>
    <circle cx="22" cy="20" r="17.500" fill="url(#skin)" />
    <ellipse cx="16.500" cy="18.500" rx="1.700" ry="2.600" fill="#5b3a12" />
    <ellipse cx="28.500" cy="18" rx="1.700" ry="2.600" fill="#5b3a12" />
    <path d="M18 28H27" stroke="#5b3a12" strokeWidth="1.600" strokeLinecap="round" />
    <path d="M22 9Q23 5 19 5L10 7Q5 9 3 14L1 18Q3 22 7 20Q9 15 13 14L19 11Q21 11 22 9Z" fill="#fbc02d" stroke="#d98a0b" strokeWidth="1" />
    <path d="M11 9L19 8" stroke="#d98a0b" strokeWidth=".8" />
  </Emoji>
);

const ThumbUp = () => (
  <svg viewBox="0 0 32 32" role="img" aria-label="pulgar arriba">
    <defs>
      <linearGradient id="thumb" x1="0" y1="0" x2="0" y2="1">
        <stop offset="0" stopColor="#ffd84a" />
        <stop offset="1" stopColor="#f6a91a" />
      </linearGradient>
    </defs>
    <path d="M17 1Q20 0 20 5L19.500 13H27Q31 13 31 15.500Q31 17.500 29.500 18Q31 19 30.500 21Q30 22.500 29 23Q30 25 29 26.500Q28 27.500 27 28Q27.500 31.500 23 31.500H13Q7 31.500 2 29.500Q1 22 2 14Q6 13 9 11L14.500 5Q15.500 1.500 17 1Z" fill="url(#thumb)" />
    <path d="M30 18H21Q19.500 15.500 22 13.500M29.500 23H21.500Q19 21 21 18M28 28H22Q19.500 25.500 21.500 23" fill="none" stroke="#c77d0c" strokeWidth="1.200" />
  </svg>
);

const Heart = () => (
  <svg viewBox="0 0 32 32" role="img" aria-label="corazón">
    <defs>
      <linearGradient id="heart" x1="0" y1="0" x2="0" y2="1">
        <stop offset="0" stopColor="#ff6a62" />
        <stop offset=".45" stopColor="#f93a3a" />
        <stop offset="1" stopColor="#d91a22" />
      </linearGradient>
    </defs>
    <path d="M16 7Q13.500 2 8.500 2Q1 3 1 11Q1.500 20 16 30Q30.500 20 31 11Q31 3 23.500 2Q18.500 2 16 7Z" fill="url(#heart)" />
  </svg>
);

const DoubleTick = () => (
  <svg width="31" height="20" viewBox="0 0 31 20" fill="none" stroke="#5a6b57" strokeWidth="3" role="img" aria-label="entregado">
    <path d="M1 12L7.500 18L21.500 1M12.500 16L15.500 18L30 1" />
  </svg>
);

const ForwardIcon = () => (
  <svg width="36" height="26" viewBox="0 0 36 26" fill="none" stroke="#636261" strokeWidth="3.400" aria-hidden="true">
    <path d="M3 25V19Q3 11 11 11H24M15 2L24 11L15 20M23 2L32 11L23 20" />
  </svg>
);

const GroupLogo = () => (
  <svg viewBox="-49 -49 98 98" role="img" aria-label="RM Importadas">
    <defs>
      <path id="lower-arc" d="M-42 0A42 42 0 0 0 42 0" />
    </defs>
    <circle r="49" fill="#f7f8f6" />
    <circle r="45.500" fill="none" stroke="#10493a" strokeWidth="2.400" />
    <circle r="30" fill="#10493a" />
    <path d="M-2 -18L6 -24H16L25 -17L21 -9L17 -11V2H1V-11Z" fill="#f7f8f6" />
    <path d="M5 -25Q10 -18 15 -25" fill="#10493a" />
    <circle cx="-12" cy="-11" r="11" fill="#f7f8f6" stroke="#10493a" strokeWidth="1.500" />
    <path d="M-12 -15L-8 -12L-9.500 -7H-14.500L-16 -12ZM-18 -20L-13 -21L-15 -18ZM-3 -16L-1 -10L-4 -11ZM-21 -8L-17 -4L-21 -3ZM-7 -2L-12 0L-10 -4Z" fill="#10493a" />
    <path d="M-32 -27Q-32 -21 -26 -23M22 -24Q27 -19 29 -25" fill="none" stroke="#10493a" strokeWidth="2.400" />
    <text y="20" textAnchor="middle" fontFamily="'Liberation Serif', serif" fontWeight="700" fontSize="28" fill="#f7f8f6" stroke="#f7f8f6" strokeWidth=".8">RM</text>
    <g fill="#10493a">
      <path id="badge-star" d="M-37 -6L-36 -3.500H-33.500L-35.500 -2L-34.500 1L-37 -1L-39.500 1L-38.500 -2L-40.500 -3.500H-38Z" />
      <use href="#badge-star" x="73" />
    </g>
    <text fontFamily="'Liberation Sans', sans-serif" fontWeight="700" fontSize="13" fill="#10493a" textAnchor="middle">
      <textPath href="#lower-arc" startOffset="50%">IMPORTADAS</textPath>
    </text>
  </svg>
);

const Sent = ({ time }: { time: string }) => (
  <Meta>
    <time>{time}</time>
    <DoubleTick />
  </Meta>
);

type MessageProps = {
  out?: boolean;
  first?: boolean;
  time: string;
  reaction?: React.ReactNode;
  children: React.ReactNode;
};

const Message = ({ out, first, time, reaction, children }: MessageProps) => (
  <Row $out={out} $first={first} $reacted={!!reaction}>
    <Bubble $out={out} $tail={first}>
      {first && (
        <Tail $out={out} viewBox="0 0 14 24" aria-hidden="true">
          <path d="M0 0H11Q16 0 13 5L0 23Z" />
        </Tail>
      )}
      <Body>
        <Text>{children}</Text>
        {out ? <Sent time={time} /> : <Meta><time>{time}</time></Meta>}
      </Body>
      {reaction && <Reaction aria-label="Reacciones">{reaction}</Reaction>}
    </Bubble>
  </Row>
);

const GROUP_URL = "https://chat.whatsapp.com/BhVTjgpoALcAXNUL86Z92g";
const SHOP_URL = "https://www.instagram.com/rm.importada/";

export default function App() {
  return (
    <Page>
      <GlobalStyle />
      <Header>
        <Avatar>
          <svg width="30" height="34" viewBox="0 0 30 34" fill="#636261" aria-hidden="true">
            <circle cx="15" cy="8.500" r="7.500" />
            <path d="M0 29Q0 20 15 20T30 29V31Q30 33 28 33H2Q0 33 0 31Z" />
          </svg>
        </Avatar>
        <Title>Lautaro camiseta boca</Title>
        <Tools>
          <IconButton aria-label="Buscar">
            <svg viewBox="0 0 24 24" fill="none" stroke="currentColor" strokeWidth="2" strokeLinecap="round">
              <circle cx="9.500" cy="9.500" r="5.500" />
              <path d="M13.800 13.800L19.700 19.700" strokeWidth="2.200" />
            </svg>
          </IconButton>
          <IconButton aria-label="Menú">
            <svg viewBox="0 0 24 24" fill="currentColor">
              <circle cx="12" cy="6" r="2" />
              <circle cx="12" cy="12" r="2" />
              <circle cx="12" cy="18" r="2" />
            </svg>
          </IconButton>
        </Tools>
      </Header>

      <Chat>
        <Wallpaper />
        <Thread>
          <Row $out>
            <Forward aria-label="Reenviar"><ForwardIcon /></Forward>
            <Bubble $out $wide>
              <PreviewPad>
                <Preview href={GROUP_URL}>
                  <Thumb><GroupLogo /></Thumb>
                  <PreviewText>
                    <span>Invitación al chat grupal</span>
                    <small>{GROUP_URL}</small>
                  </PreviewText>
                </Preview>
              </PreviewPad>
              <StackedBody>
                <Paragraphs>
                  <p>Unite a este grupo para ver difusión de productos que van ingresando al país <Flag /></p>
                  <p><TextLink href={GROUP_URL}>{GROUP_URL}</TextLink></p>
                  <p><b>RECOMENDACIÓN</b> &gt;&gt; silenciar ya que por momentos se torna "ruidoso" cuando se reenvía gran cantidad de fotos.</p>
                </Paragraphs>
                <Sent time="16:13" />
              </StackedBody>
              <Action>Ver grupo</Action>
            </Bubble>
          </Row>

          <Row $out>
            <Forward aria-label="Reenviar"><ForwardIcon /></Forward>
            <Bubble $out>
              <PreviewPad>
                <Preview href={SHOP_URL}>
                  <PreviewText $inset>
                    <strong>www.instagram.com</strong>
                    <span>{SHOP_URL}</span>
                    <small>www.instagram.com</small>
                  </PreviewText>
                </Preview>
              </PreviewPad>
              <Body>
                <Text><TextLink href={SHOP_URL}>{SHOP_URL}</TextLink></Text>
                <Sent time="16:13" />
              </Body>
            </Bubble>
          </Row>

          <Message first time="16:13">Lautaro !</Message>
          <Message out first time="16:13">sumate si queres</Message>
          <Message first time="16:13" reaction={<ThumbUp />}>Gracias!!!<PrayingHands /></Message>
          <Message out first time="16:20">Bueno espero que sea la primera de muchas, la calidad que manejamos es esa, premium!</Message>
          <Message out time="16:21">abrazo, buena semana</Message>
          <Day>Hoy</Day>
          <Message out first time="10:42">¿Como fue el talle</Message>
          <Message first time="13:26" reaction={<Heart />}>Hola buenas! Espectacular muy buena la remera!!! Muchas gracias genio <RaisedHands /><Salute /></Message>
          <Message out first time="14:25">Sí, está muy bueno el diseño. Me alegro mucho. Te esperamos cuando quieras pasar por otra casaca!</Message>
        </Thread>
      </Chat>
      <Composer />
    </Page>
  );
}
